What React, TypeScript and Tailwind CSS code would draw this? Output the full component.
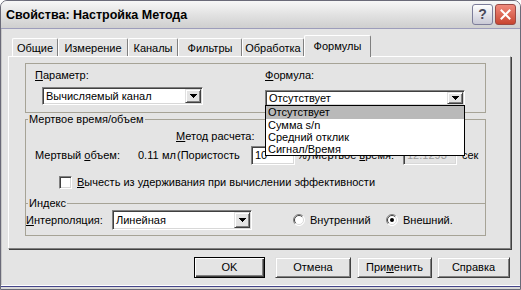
import React from "react";

const sunken =
  "border border-t-[#808080] border-l-[#808080] border-b-white border-r-white shadow-[inset_1px_1px_0_#404040,inset_-1px_-1px_0_#d8d8d8]";
const raised =
  "border border-t-[#e0e0e0] border-l-[#e0e0e0] border-b-[#404040] border-r-[#404040] shadow-[inset_1px_1px_0_#ffffff,inset_-1px_-1px_0_#808080]";
const groupLine = "border-[#a6a396]";

const Arrow = () => (
  <svg width="7" height="4" viewBox="0 0 7 4" shapeRendering="crispEdges">
    <rect x="0" y="0" width="7" height="1" fill="#000" />
    <rect x="1" y="1" width="5" height="1" fill="#000" />
    <rect x="2" y="2" width="3" height="1" fill="#000" />
    <rect x="3" y="3" width="1" height="1" fill="#000" />
  </svg>
);

type ComboProps = { value: string; className?: string; children?: React.ReactNode };

const Combo = ({ value, className = "", children }: ComboProps) => (
  <div className={`relative flex bg-white p-[1px] ${sunken} ${className}`}>
    <span className="flex-1 self-center whitespace-nowrap pl-[2px]">{value}</span>
    <span className={`flex w-[16px] items-center justify-center bg-[#e4e4e4] ${raised}`}>
      <Arrow />
    </span>
    {children}
  </div>
);

const Radio = ({ checked }: { checked?: boolean }) => (
  <svg width="12" height="12" viewBox="0 0 12 12">
    <circle cx="6" cy="6" r="5.5" fill="#fff" />
    <path d="M2.1 9.9 A5.5 5.5 0 0 1 9.9 2.1" stroke="#808080" fill="none" />
    <path d="M2.8 9.2 A4.5 4.5 0 0 1 9.2 2.8" stroke="#404040" fill="none" />
    <path d="M9.9 2.1 A5.5 5.5 0 0 1 2.1 9.9" stroke="#ffffff" fill="none" />
    <path d="M9.2 2.8 A4.5 4.5 0 0 1 2.8 9.2" stroke="#d8d8d8" fill="none" />
    {checked && <circle cx="6" cy="6" r="2" fill="#000" />}
  </svg>
);

const tabs = [
  { label: "Общие", w: "w-[46px]" },
  { label: "Измерение", w: "w-[70px]" },
  { label: "Каналы", w: "w-[50px]" },
  { label: "Фильтры", w: "w-[64px]" },
  { label: "Обработка", w: "w-[62px]" },
];

const formulas = ["Отсутствует", "Сумма s/n", "Средний отклик", "Сигнал/Время"];

export default function App() {
  return (
    <div className="flex h-[290px] w-[521px] flex-col overflow-hidden rounded-t-[7px] border border-[#6a6a78] bg-[#e4e4e4] font-['Liberation_Sans',Arial,sans-serif] text-[11px] leading-[13px] text-black shadow-[inset_0_-2px_0_#d8d8d8,inset_0_-3px_0_#45458a,inset_0_-4px_0_#ffffff,inset_1px_0_0_#c8c8c8]">
      {/* title bar */}
      <div className="flex h-[28px] items-center border-b border-b-[#9d9dbb] bg-linear-to-b from-[#f7f7f7] via-[#e2e2e2] to-[#cfcfcf] pl-[5px] pr-[4px]">
        <span className="flex-1 text-[12.5px] font-bold leading-[16px]">Свойства: Настройка Метода</span>
        <div className="flex gap-[2px]">
          <div className="flex h-[21px] w-[21px] items-center justify-center rounded-[3px] border border-[#7d7d9a] bg-linear-to-b from-white to-[#c9c9d6] text-[14px] font-bold text-[#4a4a5a]">
            ?
          </div>
          <div className="flex h-[21px] w-[21px] items-center justify-center rounded-[3px] border border-[#9a4a44] bg-linear-to-b from-[#f08a7c] to-[#c8442f]">
            <svg width="11" height="11" viewBox="0 0 11 11">
              <path d="M1.5 1.5L9.5 9.5M9.5 1.5L1.5 9.5" stroke="#fff" strokeWidth="2" strokeLinecap="square" />
            </svg>
          </div>
        </div>
      </div>

      {/* body */}
      <div className="flex flex-1 flex-col pl-[7px] pr-[9px] pt-[6px]">
        {/* tabs */}
        <div className="flex h-[21px] items-end pl-[4px]">
          {tabs.map((t) => (
            <div
              key={t.label}
              className={`flex h-[18px] items-start justify-center rounded-t-[2px] border-l border-t border-r border-l-white border-t-white border-r-[#808080] pt-[3px] ${t.w}`}
            >
              {t.label}
            </div>
          ))}
          <div className="relative z-10 mb-[-1px] flex h-[22px] w-[67px] items-start justify-center rounded-t-[2px] border-l border-t border-r border-l-white border-t-white border-r-[#808080] bg-[#e4e4e4] pt-[4px]">
            Формулы
          </div>
        </div>

        {/* tab panel */}
        <div className="flex h-[193px] flex-col border border-b-[#808080] border-l-white border-r-[#808080] border-t-white pl-[16px] pt-[6px] shadow-[1px_1px_0_#404040]">
          {/* parameter / formula */}
          <div className={`flex h-[50px] w-[461px] border ${groupLine}`}>
            <div className="flex w-[239px] flex-col pl-[9px] pt-[5px]">
              <span>
                <u>П</u>араметр:
              </span>
              <Combo value="Вычисляемый канал" className="ml-[7px] mt-[5px] h-[18px] w-[161px]" />
            </div>
            <div className="flex flex-col pt-[5px]">
              <span>
                <u>Ф</u>ормула:
              </span>
              <Combo value="Отсутствует" className="z-20 mt-[8px] h-[16px] w-[200px]">
                <div className="absolute left-[-1px] top-[14px] w-[200px] border border-black bg-white">
                  {formulas.map((f, i) => (
                    <div key={f} className={`pl-[2px] ${i === 0 ? "h-[13px] bg-[#b9b9b9]" : "h-[12px]"}`}>
                      {f}
                    </div>
                  ))}
                </div>
              </Combo>
            </div>
          </div>

          {/* dead time / volume */}
          <fieldset className={`w-[461px] border pb-[14px] ${groupLine}`}>
            <legend className="ml-[2px] px-[1px]">Мертвое время/объем</legend>
            <div className="mt-[1px] flex h-[18px] items-center pl-[150px]">
              <span className="w-[89px]">
                <u>М</u>етод расчета:
              </span>
              <Combo value="" className="h-[18px] w-[200px]" />
            </div>
            <div className="mt-[1px] flex h-[19px] items-center whitespace-nowrap pl-[9px]">
              <span className="w-[103px]">
                Мертвый <u>о</u>бъем:
              </span>
              <span className="w-[24px]">0.11</span>
              <span className="w-[15px]">мл</span>
              <span className="w-[74px]">(Пористость</span>
              <div className={`flex h-[19px] w-[44px] items-center bg-white pl-[3px] ${sunken}`}>10</div>
              <span className="ml-[2px] w-[10px]">%</span>
              <span className="w-[5px]">)</span>
              <span className="w-[91px]">
                Мертвое <u>в</u>ремя:
              </span>
              <div className={`flex h-[19px] w-[54px] items-center pl-[3px] text-[#9a9a9a] ${sunken}`}>12.1293</div>
              <span className="ml-[5px]">сек</span>
            </div>
            <div className="mt-[11px] flex h-[13px] items-center pl-[33px]">
              <span className={`h-[13px] w-[13px] bg-white ${sunken}`} />
              <span className="ml-[5px]">
                <u>В</u>ычесть из удерживания при вычислении эффективности
              </span>
            </div>
          </fieldset>

          {/* index */}
          <fieldset className={`mt-[-7px] w-[461px] border pb-[5px] ${groupLine}`}>
            <legend className="ml-[2px] bg-[#e4e4e4] px-[1px]">Индекс</legend>
            <div className="flex h-[20px] items-center">
              <span className="w-[86px]">
                <u>И</u>нтерполяция:
              </span>
              <Combo value="Линейная" className="h-[20px] w-[140px]" />
              <span className="ml-[41px] flex items-center">
                <Radio />
              </span>
              <span className="ml-[5px] w-[76px]">Внутренний</span>
              <Radio checked />
              <span className="ml-[5px]">Внешний.</span>
            </div>
          </fieldset>
        </div>

        {/* buttons */}
        <div className="mt-[8px] flex justify-end pr-[1px]">
          <button className="h-[21px] w-[71px] border border-black shadow-[inset_1px_1px_0_#ffffff,inset_-1px_-1px_0_#404040,inset_-2px_-2px_0_#808080]">
            OK
          </button>
          <button className={`ml-[10px] h-[21px] w-[76px] ${raised}`}>Отмена</button>
          <button className={`ml-[6px] h-[21px] w-[75px] ${raised}`}>
            При<u>м</u>енить
          </button>
          <button className={`ml-[5px] h-[21px] w-[73px] ${raised}`}>Справка</button>
        </div>
      </div>
    </div>
  );
}
